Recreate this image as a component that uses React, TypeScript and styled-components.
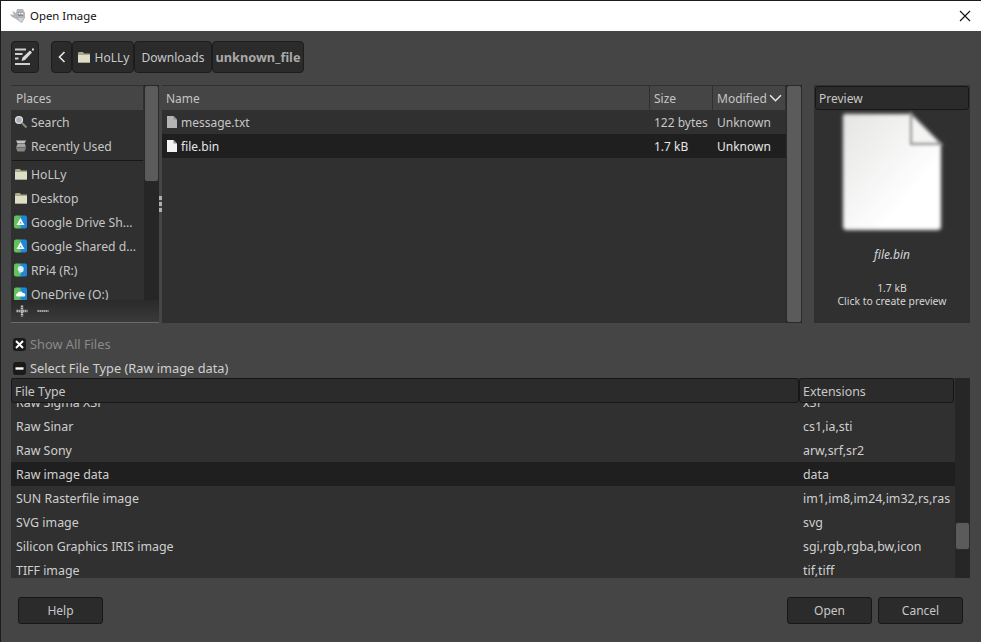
import React from "react";
import styled, { createGlobalStyle } from "styled-components";

const GlobalStyle = createGlobalStyle`
  html, body {
    margin: 0;
    padding: 0;
    background: #454545;
  }
  * {
    box-sizing: border-box;
  }
`;

const Dialog = styled.div`
  width: 981px;
  height: 642px;
  display: flex;
  flex-direction: column;
  background: #454545;
  border: 1px solid #1c1c1c;
  border-bottom: 0;
  border-right: 0;
  font-family: "Noto Sans", "Open Sans", sans-serif;
  font-size: 12px;
  color: #d4d4d4;
  overflow: hidden;
`;

const TitleBar = styled.div`
  height: 30px;
  flex: none;
  display: flex;
  align-items: center;
  background: #fff;
  color: #111;
  padding: 0 8px 1px;
`;

const TitleText = styled.span`
  margin-left: 3px;
  flex: 1;
  font-size: 11.4px;
`;

const CloseIcon = styled.svg`
  width: 12px;
  height: 12px;
  margin-right: 2px;
`;

const Content = styled.div`
  flex: 1;
  display: flex;
  flex-direction: column;
  padding: 10px 11px 0 10px;
`;

const PathBar = styled.div`
  height: 32px;
  display: flex;
  margin-bottom: 12px;
`;

const PathButton = styled.div<{ $width: number; $strong?: boolean }>`
  width: ${(p) => p.$width}px;
  display: flex;
  align-items: center;
  justify-content: center;
  gap: 4px;
  background: #2b2b2b;
  border: 1px solid #1d1d1d;
  border-radius: 4px;
  color: ${(p) => (p.$strong ? "#a8a8a8" : "#c8c8c8")};
  font-weight: ${(p) => (p.$strong ? 700 : 400)};
  font-size: ${(p) => (p.$strong ? "12.75px" : "12px")};
  white-space: nowrap;
`;

const EditButton = styled(PathButton)`
  margin-right: 12px;
`;

const Panes = styled.div`
  height: 238px;
  display: flex;
`;

const PlacesBody = styled.div`
  width: 151px;
  display: flex;
  background: #303030;
`;

const PlacesPane = styled.div`
  width: 148px;
  flex: none;
  display: flex;
  flex-direction: column;
  background: #303030;
`;

const PlacesMain = styled.div`
  height: 215px;
  display: flex;
`;

const PlacesList = styled.div`
  width: 133px;
  overflow: hidden;
  font-size: 12.2px;
`;

const HeaderCell = styled.div<{ $width?: number }>`
  height: 24px;
  width: ${(p) => (p.$width ? `${p.$width}px` : "auto")};
  flex: ${(p) => (p.$width ? "none" : 1)};
  display: flex;
  align-items: center;
  padding-left: ${(p) => (p.$width ? 4 : 5)}px;
  margin: 1px 1px 0 0;
  background: #454545;
  color: #c4c4c4;
  font-size: 12px;
`;

const PlaceRow = styled.div`
  height: 24px;
  display: flex;
  align-items: center;
  gap: 3px;
  padding-left: 3px;
  white-space: nowrap;
  overflow: hidden;
  color: #c6c6c6;
`;

const PlaceIcon = styled.svg`
  width: 14px;
  height: 14px;
  flex: none;
`;

const PlaceSeparator = styled.div`
  height: 1px;
  margin: 2px 1px 1px 1px;
  background: #171717;
`;

const PlacesTools = styled.div`
  height: 23px;
  display: flex;
  align-items: center;
  gap: 9px;
  padding-left: 5px;
  background: linear-gradient(#2a2a2a, #3a3a3a);
  border-bottom: 1px solid #6a6a6a;
`;

const Scrollbar = styled.div<{ $width: number }>`
  width: ${(p) => p.$width}px;
  flex: none;
  background: #262626;
`;

const ScrollThumb = styled.div<{ $height: string }>`
  height: ${(p) => p.$height};
  background: #5b5b5b;
  border: 1px solid #2a2a2a;
  border-radius: 3px;
`;

const Handle = styled.div`
  width: 3px;
  flex: none;
  background: #454545;
  display: flex;
  flex-direction: column;
  justify-content: center;
  align-items: center;
  gap: 2px;
`;

const Dot = styled.span`
  width: 3px;
  height: 4px;
  background: #b0b0b0;
`;

const FilesPane = styled.div`
  width: 640px;
  display: flex;
  background: #303030;
`;

const FilesMain = styled.div`
  flex: 1;
`;

const HeaderRow = styled.div`
  display: flex;
`;

const FileRow = styled.div<{ $selected?: boolean }>`
  height: 24px;
  display: flex;
  align-items: center;
  background: ${(p) => (p.$selected ? "#1f1f1f" : "transparent")};
  color: ${(p) => (p.$selected ? "#e6e6e6" : "#c6c6c6")};
`;

const FileName = styled.div`
  width: 488px;
  display: flex;
  align-items: center;
  gap: 2px;
  padding-left: 3px;
`;

const FileSize = styled.div`
  width: 63px;
  padding-left: 4px;
  white-space: nowrap;
`;

const FileDate = styled.div`
  padding-left: 4px;
`;

const SortChevron = styled.svg`
  width: 13px;
  height: 13px;
  margin-left: 2px;
`;

const PreviewPane = styled.div`
  width: 156px;
  margin-left: 12px;
  background: #303030;
  display: flex;
  flex-direction: column;
  align-items: center;
`;

const PreviewHeader = styled.div`
  width: calc(100% - 2px);
  height: 24px;
  margin-top: 1px;
  display: flex;
  align-items: center;
  padding-left: 3px;
  background: #2b2b2b;
  border: 1px solid #171717;
  border-radius: 3px;
  color: #c8c8c8;
`;

const PreviewName = styled.div`
  margin-top: 12px;
  font-style: italic;
  color: #cfd6dc;
`;

const PreviewInfo = styled.div`
  margin-top: 19px;
  font-size: 10.4px;
  line-height: 13px;
  text-align: center;
  color: #d6d6d6;
`;

const CheckRow = styled.div<{ $dim?: boolean; $top: number }>`
  height: 24px;
  margin-top: ${(p) => p.$top}px;
  display: flex;
  align-items: center;
  gap: 4px;
  padding-left: 2px;
  font-size: 12.8px;
  color: ${(p) => (p.$dim ? "#8a8a8a" : "#d0d0d0")};
`;

const CheckBox = styled.span`
  width: 13px;
  height: 13px;
  border-radius: 3px;
  background: #1a1a1a;
  display: flex;
  align-items: center;
  justify-content: center;
`;

const TypesPane = styled.div`
  height: 200px;
  margin-top: -2px;
  display: flex;
  background: #303030;
`;

const TypesMain = styled.div`
  width: 944px;
  display: flex;
  flex-direction: column;
  font-size: 12.4px;
`;

const TypeHeaderRow = styled.div`
  flex: none;
  height: 25px;
  display: flex;
`;

const TypeHeaderCell = styled.div<{ $width: number }>`
  width: ${(p) => p.$width}px;
  display: flex;
  align-items: center;
  padding: 1px 0 0 3px;
  background: #2b2b2b;
  border: 1px solid #171717;
  border-radius: 3px;
  color: #c8c8c8;
`;

const TypesViewport = styled.div`
  flex: 1;
  min-height: 0;
  overflow: hidden;
`;

const TypeRows = styled.div`
  margin-top: -13px;
`;

const TypeRow = styled.div<{ $selected?: boolean }>`
  height: 24px;
  display: flex;
  align-items: center;
  background: ${(p) => (p.$selected ? "#1f1f1f" : "transparent")};
  color: #cfcfcf;
`;

const TypeName = styled.div`
  width: 792px;
  padding-left: 5px;
`;

const TypeExt = styled.div`
  white-space: nowrap;
`;

const TypesScroll = styled.div`
  width: 15px;
  flex: none;
  padding-top: 144px;
  background: #262626;
`;

const Footer = styled.div`
  flex: 1;
  display: flex;
  justify-content: space-between;
  align-items: flex-start;
  padding: 19px 7px 0 7px;
`;

const ButtonGroup = styled.div`
  display: flex;
  gap: 6px;
`;

const Button = styled.button`
  width: 85px;
  height: 27px;
  padding: 0;
  background: #2b2b2b;
  border: 1px solid #171717;
  border-radius: 3px;
  color: #c8c8c8;
  font: inherit;
`;

const FolderIcon = () => (
  <PlaceIcon viewBox="0 0 14 14">
    <path d="M1 3.5 L1.5 2 H6 L7 3.5 H13 V12.5 H1 Z" fill="#a9a98c" />
    <rect x="1" y="5" width="12" height="7.5" fill="#dedec6" />
  </PlaceIcon>
);

const DriveIcon = ({ kind }: { kind: "drive" | "pi" | "cloud" }) => (
  <PlaceIcon viewBox="0 0 14 14">
    <defs>
      <linearGradient id={`g-${kind}`} x1="0" x2="1" y1="0" y2="0">
        <stop offset="0.4" stopColor="#62c35c" />
        <stop offset="0.6" stopColor="#1e88d8" />
      </linearGradient>
    </defs>
    <rect width="13" height="13" y="0.5" rx="2" fill={`url(#g-${kind})`} />
    {kind === "drive" && <path d="M6.5 3 L10.5 10 H2.5 Z M6.5 6.4 L5.4 8.4 H7.6 Z" fill="#fff" fillRule="evenodd" />}
    {kind === "pi" && <path d="M6.5 3 A3.2 3.2 0 1 1 6.4 9.5 L6 11 L5 8.5 A3 3 0 0 1 6.5 3 Z" fill="#e4eef8" />}
    {kind === "cloud" && <path d="M3 9.5 A1.7 1.7 0 0 1 3.5 6.3 A3 3 0 0 1 8.8 6 A2 2 0 0 1 10.5 9.5 Z" fill="#fff" />}
  </PlaceIcon>
);

const SearchIcon = () => (
  <PlaceIcon viewBox="0 0 14 14">
    <circle cx="5" cy="5" r="3.4" fill="#a8b0b8" stroke="#dcdcdc" strokeWidth="1.4" />
    <path d="M8 8 L12.5 12.5" stroke="#8a8a8a" strokeWidth="2" />
  </PlaceIcon>
);

const RecentIcon = () => (
  <PlaceIcon viewBox="0 0 14 14">
    <path d="M2 1.5 H12 L10.5 4.5 H3.5 Z" fill="#c2c2c2" />
    <path d="M3.5 5 H11 L12 8.5 H2 Z" fill="#a4a4a4" />
    <path d="M2 9 H12 L10.5 12.5 H3.5 Z" fill="#868686" />
  </PlaceIcon>
);

const DocIcon = ({ color }: { color: string }) => (
  <PlaceIcon viewBox="0 0 14 14">
    <path d="M2 1 H8.5 L12 4.5 V13 H2 Z" fill={color} />
    <path d="M8.5 1 V4.5 H12 Z" fill="#8f8f8f" />
  </PlaceIcon>
);

const WilberIcon = () => (
  <svg width="18" height="16" viewBox="0 0 18 16">
    <path d="M1 6 L5 7 L3 3 L7 5 L8 1 H14 L16 5 V10 L13 15 L11 14 L7 11 L3 9 Z" fill="#b4b4b4" />
    <path d="M9 4 H14 V8 H9 Z" fill="#8a8a8a" />
    <circle cx="10.5" cy="5.5" r="1" fill="#fff" />
    <circle cx="13" cy="5.5" r="1" fill="#fff" />
    <path d="M9 10 H15 L13 14 L10 13 Z" fill="#d0d0d0" />
  </svg>
);

const EditIcon = () => (
  <svg width="20" height="20" viewBox="0 0 20 20">
    <path d="M0 1.5 H11 V3.5 H0 Z M0 6 H7.5 V8 H0 Z M0 10.5 H3.5 V12.5 H0 Z M0 16 H15 V18 H0 Z" fill="#d0d0d0" />
    <path d="M6.5 14 L7.5 10.5 L15 3.5 L17 5.5 L10 13 Z" fill="#d8d8d8" />
    <rect x="17" y="1.5" width="2" height="2" fill="#d8d8d8" />
  </svg>
);

const BackIcon = () => (
  <svg width="12" height="12" viewBox="0 0 12 12">
    <path d="M8.5 1 L3.5 6 L8.5 11" fill="none" stroke="#e8e8e8" strokeWidth="1.6" />
  </svg>
);

const BigDoc = () => (
  <svg width="110" height="124" viewBox="0 0 110 124">
    <defs>
      <filter id="soft" x="-10%" y="-10%" width="120%" height="120%">
        <feGaussianBlur stdDeviation="1.5" />
      </filter>
      <linearGradient id="paper" x1="0" y1="0" x2="1" y2="1">
        <stop offset="0" stopColor="#e4e5e3" />
        <stop offset="0.7" stopColor="#ffffff" />
      </linearGradient>
    </defs>
    <g filter="url(#soft)">
      <path d="M8 4 H74 L104 34 V116 Q104 120 100 120 H10 Q6 120 6 116 V6 Z" fill="url(#paper)" stroke="#8a8a8a" strokeWidth="2.4" />
      <path d="M74 4 V34 H104 Z" fill="#f4f4f2" stroke="#8f8f8f" strokeWidth="2.4" />
    </g>
  </svg>
);

const fileTypes = [
  ["Raw Sigma X3F", "x3f"],
  ["Raw Sinar", "cs1,ia,sti"],
  ["Raw Sony", "arw,srf,sr2"],
  ["Raw image data", "data"],
  ["SUN Rasterfile image", "im1,im8,im24,im32,rs,ras"],
  ["SVG image", "svg"],
  ["Silicon Graphics IRIS image", "sgi,rgb,rgba,bw,icon"],
  ["TIFF image", "tif,tiff"],
];

function App() {
  return (
    <Dialog>
      <GlobalStyle />
      <TitleBar>
        <WilberIcon />
        <TitleText>Open Image</TitleText>
        <CloseIcon viewBox="0 0 12 12">
          <path d="M1 1 L11 11 M11 1 L1 11" stroke="#111" strokeWidth="1.1" />
        </CloseIcon>
      </TitleBar>
      <Content>
        <PathBar>
          <EditButton $width={28}>
            <EditIcon />
          </EditButton>
          <PathButton $width={21}>
            <BackIcon />
          </PathButton>
          <PathButton $width={62}>
            <FolderIcon />
            HoLLy
          </PathButton>
          <PathButton $width={78}>Downloads</PathButton>
          <PathButton $width={92} $strong>
            unknown_file
          </PathButton>
        </PathBar>
        <Panes>
          <PlacesBody>
            <PlacesPane>
              <PlacesMain>
                <PlacesList>
                  <HeaderCell>Places</HeaderCell>
                  <PlaceRow>
                    <SearchIcon />
                    Search
                  </PlaceRow>
                  <PlaceRow>
                    <RecentIcon />
                    Recently Used
                  </PlaceRow>
                  <PlaceSeparator />
                  <PlaceRow>
                    <FolderIcon />
                    HoLLy
                  </PlaceRow>
                  <PlaceRow>
                    <FolderIcon />
                    Desktop
                  </PlaceRow>
                  <PlaceRow>
                    <DriveIcon kind="drive" />
                    Google Drive Sh...
                  </PlaceRow>
                  <PlaceRow>
                    <DriveIcon kind="drive" />
                    Google Shared d...
                  </PlaceRow>
                  <PlaceRow>
                    <DriveIcon kind="pi" />
                    RPi4 (R:)
                  </PlaceRow>
                  <PlaceRow>
                    <DriveIcon kind="cloud" />
                    OneDrive (O:)
                  </PlaceRow>
                </PlacesList>
                <Scrollbar $width={15}>
                  <ScrollThumb $height="97px" />
                </Scrollbar>
              </PlacesMain>
              <PlacesTools>
                <svg width="12" height="12" viewBox="0 0 12 12">
                  <path d="M0.5 6 H11.5 M6 0.5 V11.5" stroke="#c0c0c0" strokeWidth="2.4" strokeDasharray="1.4 0.6" />
                </svg>
                <svg width="12" height="12" viewBox="0 0 12 12">
                  <path d="M0.5 6 H11.5" stroke="#b0b0b0" strokeWidth="2" strokeDasharray="1.4 0.6" />
                </svg>
              </PlacesTools>
            </PlacesPane>
            <Handle>
              <Dot />
              <Dot />
              <Dot />
            </Handle>
          </PlacesBody>
          <FilesPane>
            <FilesMain>
              <HeaderRow>
                <HeaderCell $width={487}>Name</HeaderCell>
                <HeaderCell $width={62}>Size</HeaderCell>
                <HeaderCell $width={72}>
                  Modified
                  <SortChevron viewBox="0 0 12 12">
                    <path d="M1 3 L6 8 L11 3" fill="none" stroke="#e8e8e8" strokeWidth="1.4" />
                  </SortChevron>
                </HeaderCell>
              </HeaderRow>
              <FileRow>
                <FileName>
                  <DocIcon color="#b4b4b4" />
                  message.txt
                </FileName>
                <FileSize>122 bytes</FileSize>
                <FileDate>Unknown</FileDate>
              </FileRow>
              <FileRow $selected>
                <FileName>
                  <DocIcon color="#f2f2f2" />
                  file.bin
                </FileName>
                <FileSize>1.7 kB</FileSize>
                <FileDate>Unknown</FileDate>
              </FileRow>
            </FilesMain>
            <Scrollbar $width={16}>
              <ScrollThumb $height="238px" />
            </Scrollbar>
          </FilesPane>
          <PreviewPane>
            <PreviewHeader>Preview</PreviewHeader>
            <BigDoc />
            <PreviewName>file.bin</PreviewName>
            <PreviewInfo>
              1.7 kB
              <br />
              Click to create preview
            </PreviewInfo>
          </PreviewPane>
        </Panes>
        <CheckRow $dim $top={9}>
          <CheckBox>
            <svg width="9" height="9" viewBox="0 0 9 9">
              <path d="M1 1 L8 8 M8 1 L1 8" stroke="#fff" strokeWidth="2" />
            </svg>
          </CheckBox>
          Show All Files
        </CheckRow>
        <CheckRow $top={0}>
          <CheckBox>
            <svg width="9" height="9" viewBox="0 0 9 9">
              <path d="M0.5 4.5 H8.5" stroke="#fff" strokeWidth="2.4" />
            </svg>
          </CheckBox>
          Select File Type (Raw image data)
        </CheckRow>
        <TypesPane>
          <TypesMain>
            <TypeHeaderRow>
              <TypeHeaderCell $width={788}>File Type</TypeHeaderCell>
              <TypeHeaderCell $width={155}>Extensions</TypeHeaderCell>
            </TypeHeaderRow>
            <TypesViewport>
              <TypeRows>
                {fileTypes.map(([name, ext]) => (
                  <TypeRow key={name} $selected={name === "Raw image data"}>
                    <TypeName>{name}</TypeName>
                    <TypeExt>{ext}</TypeExt>
                  </TypeRow>
                ))}
              </TypeRows>
            </TypesViewport>
          </TypesMain>
          <TypesScroll>
            <ScrollThumb $height="28px" />
          </TypesScroll>
        </TypesPane>
        <Footer>
          <Button>Help</Button>
          <ButtonGroup>
            <Button>Open</Button>
            <Button>Cancel</Button>
          </ButtonGroup>
        </Footer>
      </Content>
    </Dialog>
  );
}

export default App;
